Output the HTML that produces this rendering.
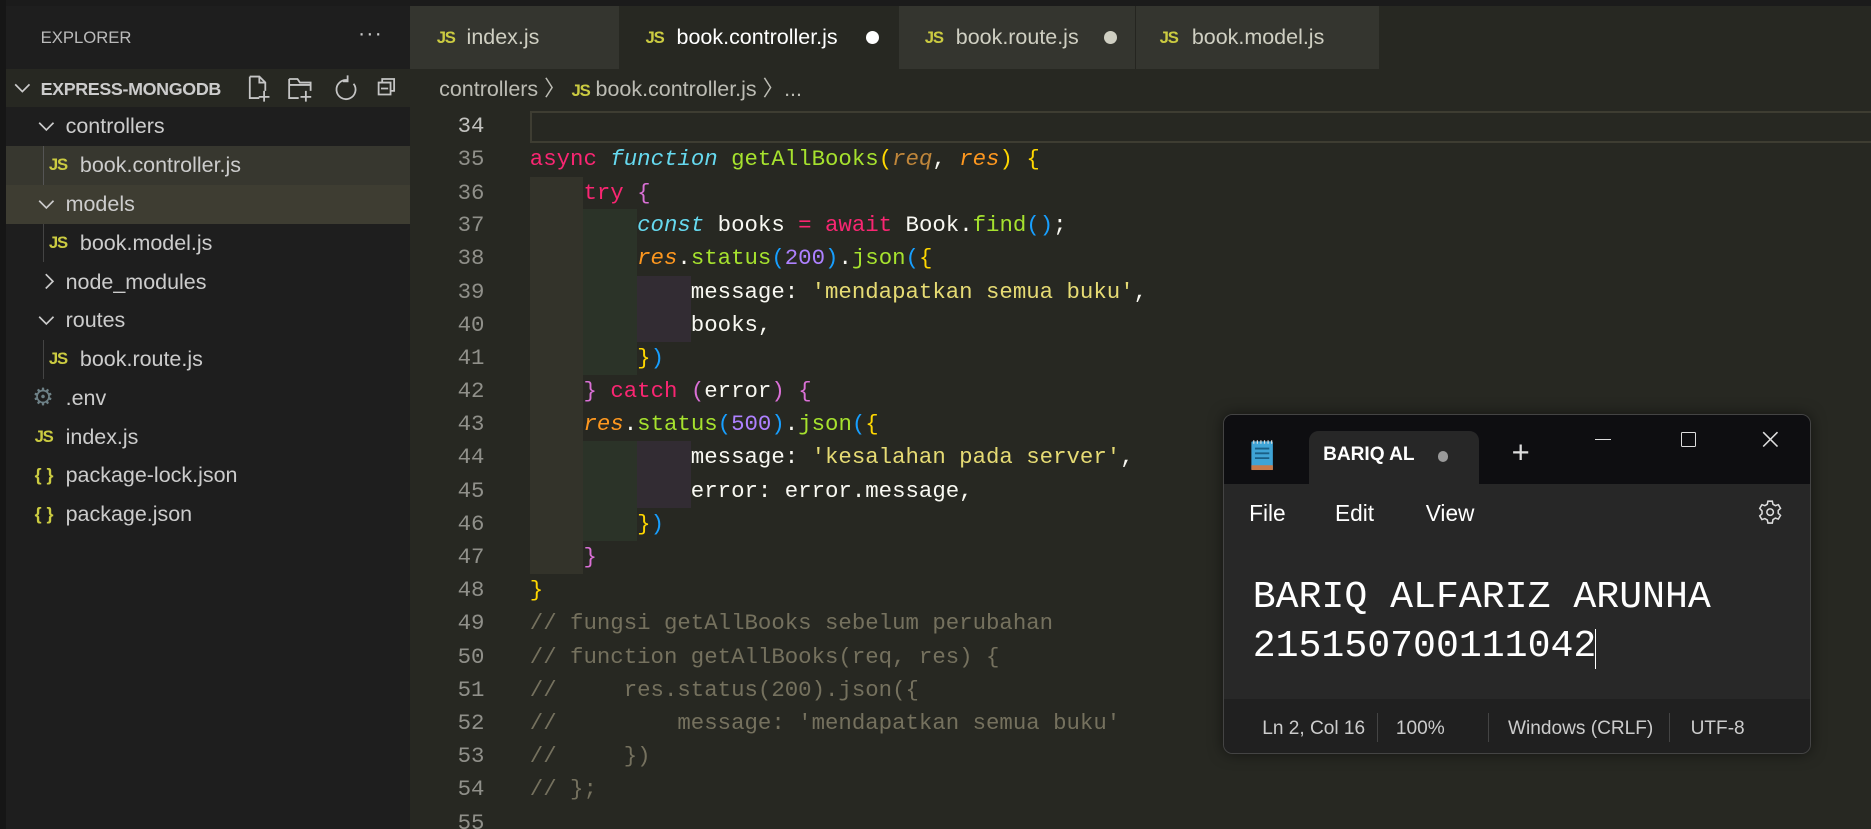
<!DOCTYPE html>
<html><head><meta charset="utf-8"><style>
html,body{margin:0;padding:0;background:#1e1f1c;overflow:hidden;width:1871px;height:829px}
#w{position:relative;width:1568px;height:695px;zoom:1.19324;background:#272822;font-family:"Liberation Sans",sans-serif;overflow:hidden}
.a{position:absolute;white-space:pre}
.side{position:absolute;left:5px;top:5px;width:339px;height:690px;background:#1e1e1e}
.it{position:absolute;left:5px;width:339px;height:32.5px;line-height:32.5px;font-size:18px;color:#cccccc}
.js{color:#cbcb41;font-weight:bold;font-size:14px;font-family:"Liberation Sans",sans-serif;letter-spacing:-1px}
.code{font-family:"Liberation Mono",monospace;font-size:18.75px;color:#f8f8f2}
.ln{position:absolute;left:344px;width:62px;text-align:right;font-family:"Liberation Mono",monospace;font-size:18.75px;color:#90908a;height:27.8px;line-height:27.8px}
.cl{position:absolute;left:444px;height:27.8px;line-height:27.8px}
.k{color:#f92672}.f{color:#66d9ef;font-style:italic}.g{color:#a6e22e}.p{color:#fd971f;font-style:italic}.s{color:#e6db74}.n{color:#ae81ff}.c{color:#75715e}
.y{color:#ffd700}.o{color:#da70d6}.b{color:#179fff}
.ib{position:absolute;width:45px;height:27.8px}
.l1{background:#33332a}.l2{background:#2b3328}.l3{background:#322c33}
.tab{position:absolute;top:5px;height:53px;line-height:53px;font-size:18px;color:#cfcfc2}
.chv{position:absolute;top:9px}
</style></head><body><div id="w">
<div class="a" style="left:0;top:0;width:1568px;height:5px;background:#1b1b1b"></div>
<div class="a" style="left:0;top:0;width:5px;height:695px;background:#161616"></div>
<div class="side"></div>
<div class="a" style="left:34px;top:22px;font-size:14px;color:#bbbbbb;line-height:20px">EXPLORER</div>
<div class="a" style="left:300px;top:18px;font-size:18px;color:#ccc;letter-spacing:1px">···</div>
<div class="a" style="left:5px;top:58px;width:339px;height:32px;background:#272822"></div>
<svg class="a" style="left:12px;top:69px" width="14" height="10"><path d="M1 2l6 6 6-6" fill="none" stroke="#ccc" stroke-width="1.4"/></svg>
<div class="a" style="left:34px;top:58px;line-height:34px;font-size:15px;font-weight:bold;color:#cccccc;letter-spacing:-0.3px">EXPRESS-MONGODB</div>
<svg class="a" style="left:205px;top:61px" width="130" height="26" viewBox="0 0 130 26" fill="none" stroke="#c5c5c5" stroke-width="1.5">
<path d="M4 3h8l5 5v7M4 3v18h8M12 3v5h5M16 15v9M11.5 20h9"/>
<path d="M37 5h7l2 3h9v7M37 5v16h8M37 10h18M51 15v9M46.5 20h9"/>
<path d="M86 6a8 8 0 1 0 5 3M86 2v5h-4" />
<path d="M112 8h10v10h-10zM115 8V5h10v10h-3M114 13h6"/>
</svg>
<div class="tab" style="left:344px;width:175px;background:#34352f"><span class="js" style="position:absolute;left:22px">JS</span><span style="position:absolute;left:47px">index.js</span></div>
<div class="tab" style="left:519px;width:234px;background:#272822;color:#fff"><span class="js" style="position:absolute;left:22px">JS</span><span style="position:absolute;left:48px">book.controller.js</span><span style="position:absolute;left:207px;top:21px;width:11px;height:11px;border-radius:6px;background:#fff"></span></div>
<div class="tab" style="left:753px;width:198px;background:#34352f"><span class="js" style="position:absolute;left:22px">JS</span><span style="position:absolute;left:48px">book.route.js</span><span style="position:absolute;left:172px;top:21px;width:11px;height:11px;border-radius:6px;background:#cfcfc2"></span></div>
<div class="tab" style="left:951px;width:204px;background:#34352f;border-left:1px solid #252520"><span class="js" style="position:absolute;left:20px">JS</span><span style="position:absolute;left:47px">book.model.js</span></div>
<div class="a" style="left:368px;top:58px;line-height:34px;font-size:18px;color:#bcbcb4">controllers 〉 <span class="js">JS</span> book.controller.js 〉...</div>
<div class="it" style="top:90px"><svg class="chv" style="left:27px" width="14" height="14"><path d="M1 4l6 6 6-6" fill="none" stroke="#ccc" stroke-width="1.4"/></svg><span class="a" style="left:50px">controllers</span></div>
<div class="it" style="top:122.5px;background:#37372f"><span class="a" style="left:31px;top:0;width:1px;height:32.5px;background:#555"></span><span class="js a" style="left:36px">JS</span><span class="a" style="left:62px">book.controller.js</span></div>
<div class="it" style="top:155px;background:#3e3d32"><svg class="chv" style="left:27px" width="14" height="14"><path d="M1 4l6 6 6-6" fill="none" stroke="#ccc" stroke-width="1.4"/></svg><span class="a" style="left:50px">models</span></div>
<div class="it" style="top:187.5px"><span class="a" style="left:31px;top:0;width:1px;height:32.5px;background:#444"></span><span class="js a" style="left:36px">JS</span><span class="a" style="left:62px">book.model.js</span></div>
<div class="it" style="top:220px"><svg class="chv" style="left:29px" width="14" height="14"><path d="M4 1l6 6-6 6" fill="none" stroke="#ccc" stroke-width="1.4"/></svg><span class="a" style="left:50px">node_modules</span></div>
<div class="it" style="top:252.5px"><svg class="chv" style="left:27px" width="14" height="14"><path d="M1 4l6 6 6-6" fill="none" stroke="#ccc" stroke-width="1.4"/></svg><span class="a" style="left:50px">routes</span></div>
<div class="it" style="top:285px"><span class="a" style="left:31px;top:0;width:1px;height:32.5px;background:#444"></span><span class="js a" style="left:36px">JS</span><span class="a" style="left:62px">book.route.js</span></div>
<div class="it" style="top:317.5px"><span class="a" style="left:22px;color:#6d8086;font-size:20px">⚙</span><span class="a" style="left:50px">.env</span></div>
<div class="it" style="top:350px"><span class="js a" style="left:24px">JS</span><span class="a" style="left:50px">index.js</span></div>
<div class="it" style="top:382.5px"><span class="a" style="left:24px;color:#cbcb41;font-weight:bold;font-size:15px">{ }</span><span class="a" style="left:50px">package-lock.json</span></div>
<div class="it" style="top:415px"><span class="a" style="left:24px;color:#cbcb41;font-weight:bold;font-size:15px">{ }</span><span class="a" style="left:50px">package.json</span></div>
<div class="a" style="left:344px;top:90px;width:1224px;height:605px;background:#272822"></div>
<div class="a" style="left:444px;top:93px;width:1130px;height:27px;border:2px solid #3e3d32;box-sizing:border-box"></div>
<div class="code">
<div class="ln" style="top:92px;color:#c2c2bf">34</div>
<div class="ln" style="top:120px">35</div><div class="ln" style="top:148px">36</div><div class="ln" style="top:175.5px">37</div><div class="ln" style="top:203px">38</div><div class="ln" style="top:231px">39</div><div class="ln" style="top:259px">40</div><div class="ln" style="top:287px">41</div><div class="ln" style="top:314.5px">42</div><div class="ln" style="top:342px">43</div><div class="ln" style="top:370px">44</div><div class="ln" style="top:398px">45</div><div class="ln" style="top:426px">46</div><div class="ln" style="top:453.5px">47</div><div class="ln" style="top:481px">48</div><div class="ln" style="top:509px">49</div><div class="ln" style="top:537px">50</div><div class="ln" style="top:565px">51</div><div class="ln" style="top:592.5px">52</div><div class="ln" style="top:620px">53</div><div class="ln" style="top:648px">54</div><div class="ln" style="top:676px">55</div>
<div class="ib l1" style="left:444px;top:148px;height:333px"></div>
<div class="ib l2" style="left:489px;top:175.5px;height:139px"></div>
<div class="ib l3" style="left:534px;top:231px;height:56px"></div>
<div class="ib l2" style="left:489px;top:370px;height:83.5px"></div>
<div class="ib l3" style="left:534px;top:370px;height:56px"></div>
<div class="cl a" style="top:120px"><span class="k">async</span> <span class="f">function</span> <span class="g">getAllBooks</span><span class="y">(</span><span class="p" style="color:#c0863a">req</span>, <span class="p">res</span><span class="y">)</span> <span class="y">{</span></div>
<div class="cl a" style="top:148px">    <span class="k">try</span> <span class="o">{</span></div>
<div class="cl a" style="top:175.5px">        <span class="f">const</span> books <span class="k">=</span> <span class="k">await</span> Book.<span class="g">find</span><span class="b">()</span>;</div>
<div class="cl a" style="top:203px">        <span class="p">res</span>.<span class="g">status</span><span class="b">(</span><span class="n">200</span><span class="b">)</span>.<span class="g">json</span><span class="b">(</span><span class="y">{</span></div>
<div class="cl a" style="top:231px">            message: <span class="s">'mendapatkan semua buku'</span>,</div>
<div class="cl a" style="top:259px">            books,</div>
<div class="cl a" style="top:287px">        <span class="y">}</span><span class="b">)</span></div>
<div class="cl a" style="top:314.5px">    <span class="o">}</span> <span class="k">catch</span> <span class="o">(</span>error<span class="o">)</span> <span class="o">{</span></div>
<div class="cl a" style="top:342px">    <span class="p">res</span>.<span class="g">status</span><span class="b">(</span><span class="n">500</span><span class="b">)</span>.<span class="g">json</span><span class="b">(</span><span class="y">{</span></div>
<div class="cl a" style="top:370px">            message: <span class="s">'kesalahan pada server'</span>,</div>
<div class="cl a" style="top:398px">            error: error.message,</div>
<div class="cl a" style="top:426px">        <span class="y">}</span><span class="b">)</span></div>
<div class="cl a" style="top:453.5px">    <span class="o">}</span></div>
<div class="cl a" style="top:481px"><span class="y">}</span></div>
<div class="cl a c" style="top:509px">// fungsi getAllBooks sebelum perubahan</div>
<div class="cl a c" style="top:537px">// function getAllBooks(req, res) {</div>
<div class="cl a c" style="top:565px">//     res.status(200).json({</div>
<div class="cl a c" style="top:592.5px">//         message: 'mendapatkan semua buku'</div>
<div class="cl a c" style="top:620px">//     })</div>
<div class="cl a c" style="top:648px">// };</div>
</div>
<div class="a" style="left:1025px;top:347px;width:493px;height:285px;border-radius:8px;border:1px solid #444;background:#272727;overflow:hidden;box-sizing:border-box;box-shadow:0 0 12px rgba(0,0,0,.5)">
<div class="a" style="left:0;top:0;width:493px;height:58px;background:#0e0e11"></div>
<div class="a" style="left:71px;top:13px;width:143px;height:46px;background:#272727;border-radius:8px 8px 0 0"></div>
<svg class="a" style="left:21px;top:20px" width="22" height="28" viewBox="0 0 22 28"><rect x="2" y="2" width="18" height="24" rx="1" fill="#3fa4d6"/><rect x="2" y="22" width="18" height="4" fill="#c77a4a"/><path d="M5 8h12M5 12h12M5 16h12" stroke="#1a5f86" stroke-width="1.5"/><path d="M4 1v3M7 1v3M10 1v3M13 1v3M16 1v3M19 1v3" stroke="#ddd" stroke-width="1"/></svg>
<div class="a" style="left:83px;top:24px;font-size:16px;font-weight:bold;color:#fff">BARIQ AL</div>
<div class="a" style="left:179px;top:30px;width:9px;height:9px;border-radius:5px;background:#9a9a9a"></div>
<div class="a" style="left:241px;top:17px;font-size:26px;color:#ddd;font-weight:200">+</div>
<div class="a" style="left:311px;top:20px;width:13px;height:1px;background:#ddd"></div>
<div class="a" style="left:383px;top:14px;width:11px;height:11px;border:1.5px solid #ddd;border-radius:1px"></div>
<svg class="a" style="left:451px;top:13px" width="14" height="14"><path d="M1 1L13 13M13 1L1 13" stroke="#ddd" stroke-width="1.3"/></svg>
<div class="a" style="left:21px;top:71px;font-size:19px;color:#fff">File</div>
<div class="a" style="left:93px;top:71px;font-size:19px;color:#fff">Edit</div>
<div class="a" style="left:169px;top:71px;font-size:19px;color:#fff">View</div>
<svg class="a" style="left:447px;top:70px" width="22" height="22" viewBox="0 0 24 24" fill="none" stroke="#ddd" stroke-width="1.4"><circle cx="12" cy="12" r="3"/><path d="M10 2h4l.6 2.8 2.2 1.3 2.7-.9 2 3.4-2.1 1.9v2.6l2.1 1.9-2 3.4-2.7-.9-2.2 1.3L14 22h-4l-.6-2.8-2.2-1.3-2.7.9-2-3.4 2.1-1.9v-2.6L2.5 8.6l2-3.4 2.7.9 2.2-1.3z"/></svg>
<div class="a" style="left:0;top:113px;width:493px;height:125px;background:#282828"></div>
<div class="a" style="left:24px;top:133px;font-family:'Liberation Mono',monospace;font-size:32px;line-height:41px;color:#fff">BARIQ ALFARIZ ARUNHA
215150700111042</div>
<div class="a" style="left:311px;top:179px;width:1px;height:34px;background:#fff"></div>
<div class="a" style="left:0;top:238px;width:493px;height:47px;background:#202020"></div>
<div class="a" style="left:32px;top:254px;font-size:16px;color:#ccc">Ln 2, Col 16</div>
<div class="a" style="left:128px;top:250px;width:1px;height:24px;background:#444"></div>
<div class="a" style="left:144px;top:254px;font-size:16px;color:#ccc">100%</div>
<div class="a" style="left:221px;top:250px;width:1px;height:24px;background:#444"></div>
<div class="a" style="left:238px;top:254px;font-size:16px;color:#ccc">Windows (CRLF)</div>
<div class="a" style="left:373px;top:250px;width:1px;height:24px;background:#444"></div>
<div class="a" style="left:391px;top:254px;font-size:16px;color:#ccc">UTF-8</div>
</div>
</div></body></html>
